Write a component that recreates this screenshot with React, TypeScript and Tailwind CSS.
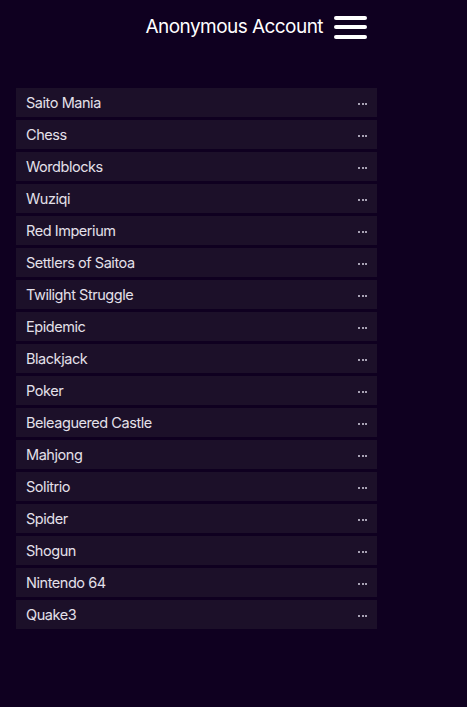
import React from "react";

const games = [
  "Saito Mania",
  "Chess",
  "Wordblocks",
  "Wuziqi",
  "Red Imperium",
  "Settlers of Saitoa",
  "Twilight Struggle",
  "Epidemic",
  "Blackjack",
  "Poker",
  "Beleaguered Castle",
  "Mahjong",
  "Solitrio",
  "Spider",
  "Shogun",
  "Nintendo 64",
  "Quake3",
];

export default function App() {
  return (
    <div
      className="w-[467px] h-[707px] bg-[#0f0020] overflow-hidden"
      style={{ fontFamily: "Inter, 'Liberation Sans', sans-serif" }}
    >
      <div className="flex items-center justify-end w-[367px] h-[54px] gap-[11px]">
        <span className="text-white text-[19px] tracking-[-0.55px] pt-[1px]">Anonymous Account</span>
        <div className="flex flex-col gap-[5.5px] w-[33px]">
          <div className="h-[4px] rounded-full bg-white" />
          <div className="h-[4px] rounded-full bg-white" />
          <div className="h-[4px] rounded-full bg-white" />
        </div>
      </div>
      <div className="mt-[34px] ml-[16px] w-[361px] flex flex-col gap-[3px]">
        {games.map((g) => (
          <div
            key={g}
            className="h-[29px] bg-[#1c1029] flex items-center justify-between pl-[10px] pr-[10px]"
          >
            <span className="text-[#e4e0ea] text-[14.5px] tracking-[-0.45px]">{g}</span>
            <div className="flex gap-[1.5px] mt-[3px]">
              <div className="w-[2px] h-[2px] bg-[#a8a2b4]" />
              <div className="w-[2px] h-[2px] bg-[#a8a2b4]" />
              <div className="w-[2px] h-[2px] bg-[#a8a2b4]" />
            </div>
          </div>
        ))}
      </div>
    </div>
  );
}
